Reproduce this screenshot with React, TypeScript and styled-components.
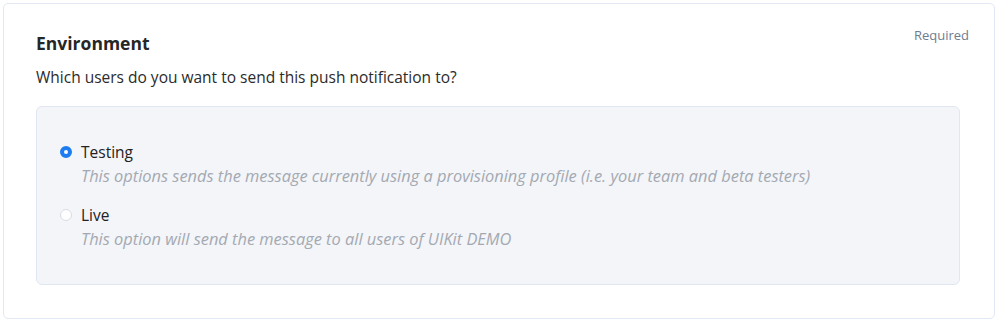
import styled, { createGlobalStyle } from "styled-components";

const GlobalStyle = createGlobalStyle`
  body {
    margin: 0;
    background: #ffffff;
    font-family: "Open Sans", "Noto Sans", sans-serif;
  }
`;

type Option = {
  id: string;
  label: string;
  description: string;
};

const options: Option[] = [
  {
    id: "testing",
    label: "Testing",
    description:
      "This options sends the message currently using a provisioning profile (i.e. your team and beta testers)",
  },
  {
    id: "live",
    label: "Live",
    description: "This option will send the message to all users of UIKit DEMO",
  },
];

const Page = styled.div`
  padding: 3px 5px 3px 3px;
`;

const Card = styled.section`
  border: 1px solid #e2e8f3;
  border-radius: 5px;
  padding: 26px 34px 33px 32px;
  height: 316px;
  box-sizing: border-box;
`;

const Header = styled.header`
  display: flex;
  justify-content: space-between;
  align-items: flex-start;
`;

const Title = styled.h2`
  margin: 0;
  font-size: 17.5px;
  line-height: 26px;
  font-weight: 700;
  color: #262626;
`;

const Required = styled.span`
  font-size: 13px;
  line-height: 18px;
  color: #6f7c8f;
  margin-top: -4px;
  margin-right: -9px;
`;

const Subtitle = styled.p`
  margin: 10px 0 0;
  font-size: 15.5px;
  line-height: 22px;
  color: #2b2b2b;
`;

const Panel = styled.div`
  margin-top: 18px;
  background: #f3f5f9;
  border: 1px solid #e1e7f2;
  border-radius: 6px;
  padding: 34px 24px 34px 23px;
  display: flex;
  flex-direction: column;
  gap: 17px;
`;

const OptionRow = styled.label`
  display: grid;
  grid-template-columns: 12px 1fr;
  column-gap: 9px;
  cursor: pointer;
`;

const RadioDot = styled.span<{ $checked: boolean }>`
  width: 12px;
  height: 12px;
  margin-top: 5px;
  box-sizing: border-box;
  border-radius: 50%;
  background: #ffffff;
  border: ${(p) => (p.$checked ? "4px solid #1d7cf2" : "1px solid #d9dde3")};
`;

const Label = styled.span`
  font-size: 15.5px;
  line-height: 22px;
  color: #222;
`;

const Description = styled.span`
  grid-column: 2;
  margin-top: 2px;
  font-size: 16.4px;
  line-height: 22px;
  font-style: italic;
  color: #a4a9b1;
`;

export default function App() {
  const selected = "testing";
  return (
    <Page>
      <GlobalStyle />
      <Card>
        <Header>
          <Title>Environment</Title>
          <Required>Required</Required>
        </Header>
        <Subtitle>Which users do you want to send this push notification to?</Subtitle>
        <Panel>
          {options.map((o) => (
            <OptionRow key={o.id}>
              <RadioDot $checked={o.id === selected} />
              <Label>{o.label}</Label>
              <Description>{o.description}</Description>
            </OptionRow>
          ))}
        </Panel>
      </Card>
    </Page>
  );
}
